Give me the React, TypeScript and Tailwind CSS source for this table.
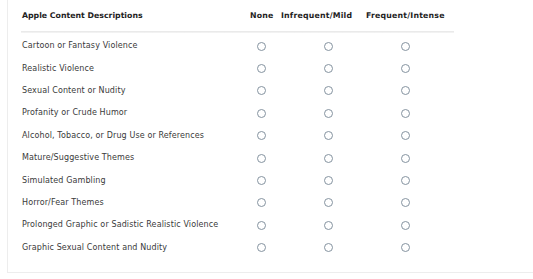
const descriptors = [
  'Cartoon or Fantasy Violence',
  'Realistic Violence',
  'Sexual Content or Nudity',
  'Profanity or Crude Humor',
  'Alcohol, Tobacco, or Drug Use or References',
  'Mature/Suggestive Themes',
  'Simulated Gambling',
  'Horror/Fear Themes',
  'Prolonged Graphic or Sadistic Realistic Violence',
  'Graphic Sexual Content and Nudity',
]

function Radio() {
  return <span className="block w-[9px] h-[9px] rounded-full border border-[#8593a0] bg-white" />
}

export default function App() {
  return (
    <div className="w-[533px] h-[279px] bg-white overflow-hidden" style={{ fontFamily: '"DejaVu Sans", Verdana, sans-serif' }}>
      <div className="ml-[7px] h-[273px] border-l border-b border-[#ededed] pl-[13px]">
        {/* Header */}
        <div className="grid grid-cols-[228px_31px_85px_auto] h-[31px] items-center pl-px text-[7.8px] font-bold tracking-[0.2px] text-[#1e1e1e] w-[433px]">
          <span className="tracking-normal">Apple Content Descriptions</span>
          <span>None</span>
          <span>Infrequent/Mild</span>
          <span>Frequent/Intense</span>
        </div>
        <div className="w-[433px] h-[2px] bg-gradient-to-b from-[#e6e6e6] to-[#f6f6f6]" />

        {/* Rows */}
        <div className="pt-[2px]">
          {descriptors.map(d => (
            <div key={d} className="grid grid-cols-[219px_41px_92px_62px] h-[22.4px] items-center pl-px text-[8px] tracking-[0.12px] text-[#3a3a3a]">
              <span>{d}</span>
              <span className="flex justify-center"><Radio /></span>
              <span className="flex justify-center"><Radio /></span>
              <span className="flex justify-center"><Radio /></span>
            </div>
          ))}
        </div>
      </div>
    </div>
  )
}
